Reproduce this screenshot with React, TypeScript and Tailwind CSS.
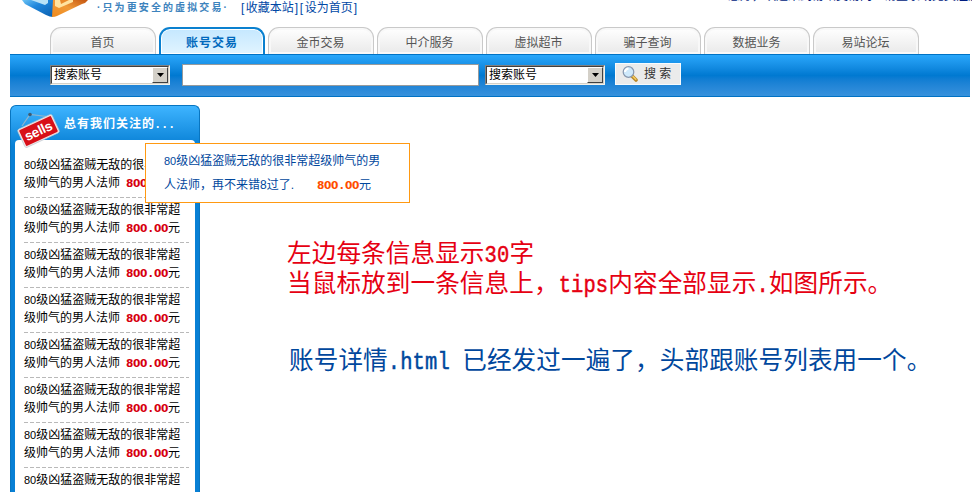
import React from 'react';

const tabs = ['首页', '账号交易', '金币交易', '中介服务', '虚拟超市', '骗子查询', '数据业务', '易站论坛'];
const rows = [0, 1, 2, 3, 4, 5, 6, 7];

function Logo() {
  return (
    <svg className="ml-[15px] h-[18px] w-[78px] shrink-0" viewBox="0 0 78 18">
      <defs>
        <linearGradient id="lb" x1="0" y1="0" x2="1" y2="1">
          <stop offset="0" stopColor="#6cc4f5" />
          <stop offset="0.4" stopColor="#1f86dc" />
          <stop offset="1" stopColor="#0a5fae" />
        </linearGradient>
        <linearGradient id="lo" x1="0" y1="1" x2="1" y2="0">
          <stop offset="0" stopColor="#f08a1c" />
          <stop offset="0.5" stopColor="#f09a38" />
          <stop offset="1" stopColor="#c4540f" />
        </linearGradient>
      </defs>
      <path d="M7 0H38V17Q35 17 31 15L10 4Z" fill="url(#lb)" />
      <path d="M38 0H73Q71 3 67 4L42 16Q40 17 37 17Z" fill="url(#lo)" />
      <path d="M16 0H33V3L30 5Z" fill="#b9e2f7" />
      <path d="M40 0H58V2L44 8L40 6Z" fill="#ffe3a0" />
      <path d="M45 0H54L46 4Z" fill="#e98a2b" />
    </svg>
  );
}

function SelectBox() {
  return (
    <div className="flex h-5 w-[120px] border border-t-[#808080] border-r-[#f4f2ea] border-b-[#f4f2ea] border-l-[#808080] bg-white">
      <div className="flex w-full border border-t-[#404040] border-r-[#d4d0c8] border-b-[#d4d0c8] border-l-[#404040]">
        <span className="flex-1 pl-[2px] text-xs leading-[16px] text-black">搜索账号</span>
        <span className="flex h-4 w-4 items-center justify-center border border-t-white border-r-[#404040] border-b-[#404040] border-l-white bg-[#d4d0c8]">
          <svg className="h-1 w-[7px]" viewBox="0 0 7 4"><path d="M0 0H7L3.5 4Z" /></svg>
        </span>
      </div>
    </div>
  );
}

function Magnifier() {
  return (
    <svg className="h-4 w-4" viewBox="0 0 16 16">
      <path d="M10 10L14 14" stroke="#b9882a" strokeWidth="3.6" strokeLinecap="round" />
      <path d="M10 9.5L13.8 13.2" stroke="#f2cc62" strokeWidth="1.6" strokeLinecap="round" />
      <circle cx="6.5" cy="6" r="5.3" fill="#cfe9fb" stroke="#8796ad" strokeWidth="1.2" />
      <path d="M3 6Q3 3 6.5 2.4" stroke="#fff" strokeWidth="2" fill="none" />
    </svg>
  );
}

function SellsBadge() {
  return (
    <svg className="absolute top-0 left-[6px] h-[44px] w-[44px]" viewBox="0 0 44 44">
      <path d="M5 20L13 8.5L34 11" stroke="#8db4ce" strokeWidth="1.2" fill="none" />
      <circle cx="13" cy="8.5" r="1.8" fill="#3d5c75" />
      <g transform="rotate(-25 21.5 25)">
        <rect x="2.5" y="15" width="38" height="20" rx="2" fill="#f2e3e4" stroke="#b9c7d1" strokeWidth="0.6" />
        <rect x="4" y="16.3" width="35" height="17.4" rx="1" fill="#d80f18" />
        <text x="21.5" y="29.5" textAnchor="middle" fontFamily="Liberation Sans, sans-serif" fontWeight="bold" fontSize="13.5" textLength="29" fill="#fff">sells</text>
      </g>
    </svg>
  );
}

function Price({ tone }: { tone: string }) {
  return (
    <b className={`inline-flex w-[42px] font-['DejaVu_Sans',sans-serif] text-[10.6px] leading-none tracking-[-0.37px] ${tone}`}>
      800<span className="w-[7px] text-center">.</span>00
    </b>
  );
}

function Latin({ children }: { children: React.ReactNode }) {
  return <span className="inline-block origin-[50%_72%] scale-y-[1.2] font-['Liberation_Mono',monospace] text-[20.5px] whitespace-pre [-webkit-text-stroke:0.4px_currentColor]">{children}</span>;
}

export default function App() {
  return (
    <div className="h-[492px] w-[972px] overflow-hidden bg-white font-['Liberation_Sans','Noto_Sans_CJK_SC',sans-serif] text-xs text-black">
      <header className="flex h-[27px] items-start overflow-hidden whitespace-nowrap">
        <Logo />
        <p className="ml-1 flex w-[130px] justify-between text-[10px] leading-[15px] font-bold text-[#3d83bd]">
          {'·只为更安全的虚拟交易·'.split('').map((c, i) => <span key={i}>{c}</span>)}
        </p>
        <p className="ml-[14px] leading-4 text-[#0048a5]"><span className="tracking-[1.5px]">[</span>收藏本站<span className="pl-[1px] tracking-[1.6px]">][</span>设为首页<span className="pl-[1px]">]</span></p>
        <p className="-mt-[12px] mr-[2px] ml-auto h-[16px] w-[242px] leading-[16px] text-[#001b80]">您好，欢迎来到易站交易网！请登录或免费注册</p>
      </header>

      <nav className="flex h-[27px] gap-[3px] pl-[50px]">
        {tabs.map((t, i) => i === 1 ? (
          <a key={t} className="h-[27px] w-[106px] rounded-t-[11px] border-2 border-b-0 border-[#0a80cf] bg-linear-to-b from-[#c5e8ff] to-[#e1f4ff] text-center text-xs leading-[28px] font-bold tracking-[1px] text-[#0069bd] shadow-[inset_0_0_0_1px_white]">{t}</a>
        ) : (
          <a key={t} className="h-[27px] w-[106px] rounded-t-[11px] border border-b-0 border-[#c9c9c9] bg-linear-to-b from-white to-[#e9e9e9] pr-px text-center text-xs leading-[30px] text-[#555] shadow-[inset_0_0_0_2px_#f8f8f8]">{t}</a>
        ))}
      </nav>

      <form className="ml-[10px] flex h-[43px] w-[960px] items-start border-y border-[#0072c4] bg-linear-to-b from-[#29a7fb] via-[#0079d1] via-50% to-[#3691dc] pl-10">
        <div className="mt-[10px]"><SelectBox /></div>
        <div className="mt-[9px] ml-3 h-[22px] w-[297px] border border-[#969a9c] bg-white" />
        <div className="mt-[10px] ml-[6px]"><SelectBox /></div>
        <button type="button" className="mt-[8px] ml-[10px] flex h-[22px] w-[66px] items-center border border-[#f8fbfd] bg-[#ebebeb] pl-[6px] text-[#333]">
          <Magnifier />
          <span className="ml-[6px] leading-[18px]">搜 索</span>
        </button>
      </form>

      <main className="flex pt-2 pl-[10px]">
        <aside className="relative h-[387px] w-[190px] shrink-0 rounded-t-[6px] border border-b-0 border-[#0875c0] bg-[#0880d5] bg-[linear-gradient(#3eb4ff,#0880d5_40px)] px-1">
          <h2 className="h-[34px] pl-[49px] text-xs leading-[36px] font-bold tracking-[1px] text-white">总有我们关注的<span className="pl-[1px] tracking-[3.7px]">...</span></h2>
          <SellsBadge />
          <ul className="h-[352px] overflow-hidden rounded-t-[4px] bg-white pt-[13px] pr-[6px] pl-[9px]">
            {rows.map((r) => (
              <li key={r} className="flex h-[45px] flex-col pt-[3px]">
                <p className="h-[18px] leading-[18px] whitespace-nowrap"><span className="text-[11px]">80</span>级凶猛盗贼无敌的很非常超</p>
                {r < 7 && (
                  <>
                    <p className="flex h-[18px] items-center leading-[18px] whitespace-nowrap">级帅气的男人法师<span className="w-[6px]" /><Price tone="text-[#d7000f]" />元</p>
                    <i className="mt-[5px] h-px bg-[repeating-linear-gradient(90deg,#b9b9b9_0_4px,transparent_4px_6px)]" />
                  </>
                )}
              </li>
            ))}
          </ul>
          <div className="absolute top-[37px] left-[134px] z-10 h-[60px] w-[265px] border border-solid border-[#ff9912] bg-white pt-[5px] pl-[18px] leading-6 whitespace-nowrap text-[#00479d]">
            <p className="h-6"><span className="text-[11px]">80</span>级凶猛盗贼无敌的很非常超级帅气的男</p>
            <p className="flex h-6 items-center">人法师，再不来错8过了.<span className="w-[23px]" /><Price tone="text-[#ff4e00]" />元</p>
          </div>
        </aside>

        <section className="pt-[134px] pl-[87px] text-[24.6px] leading-[30px] font-normal tracking-[0.1px] whitespace-nowrap text-[#e60012]">
          <p className="h-[30px]">左边每条信息显示<Latin>30</Latin>字</p>
          <p className="h-[30px]">当鼠标放到一条信息上，<Latin>tips</Latin>内容全部显示<Latin>.</Latin>如图所示。</p>
          <p className="mt-[47px] ml-[2px] h-[30px] text-[#00479d]">账号详情<Latin>.html </Latin>已经发过一遍了，头部跟账号列表用一个。</p>
        </section>
      </main>
    </div>
  );
}
